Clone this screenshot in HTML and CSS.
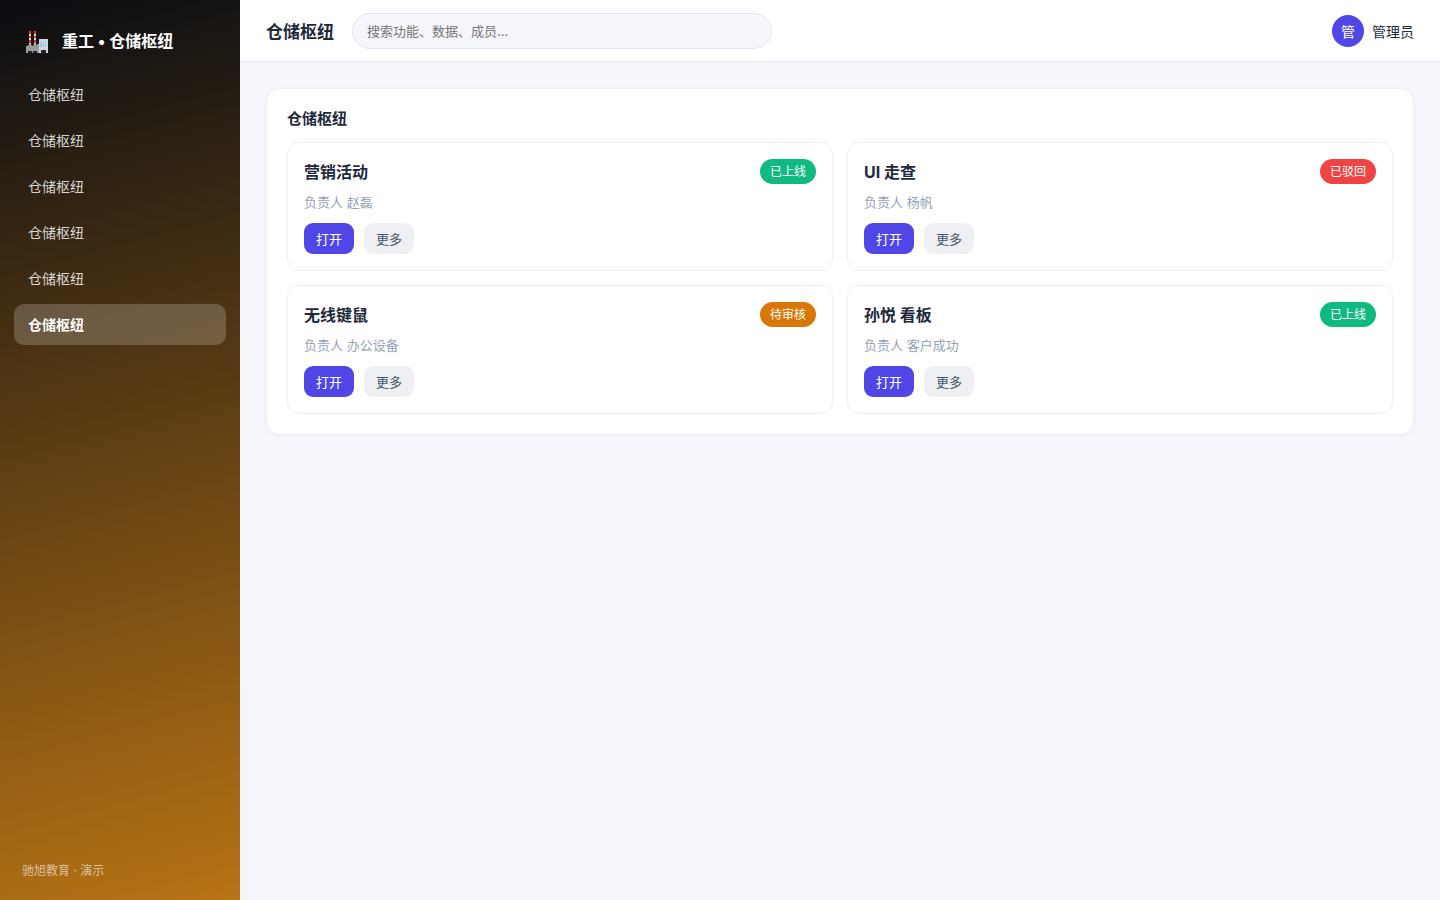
FILE: index.html
```html
<!DOCTYPE html>
<html lang="zh-CN">
<head>
<meta charset="utf-8">
<title>仓储枢纽</title>
<link rel="stylesheet" href="styles.css">
</head>
<body>
<div class="app">
  <aside class="sidebar">
    <div class="brand">
      <svg class="logo" viewBox="0 0 22 22" aria-hidden="true" shape-rendering="crispEdges">
        <path fill="#dedede" d="M3 0h2v13H3zM8 0h2v13H8z"/>
        <path fill="#f02c2c" d="M3 0h2v3H3zM8 0h2v3H8zM3 5h2v2H3zM8 5h2v2H8zM3 9h2v3H3zM8 9h2v3H8z"/>
        <path fill="#9a9a9a" d="M0 15h2v-1h1v-1h2v1h1v1h1v-1h1v-1h2v1h1v-1h2v9H0z"/>
        <path fill="#d4d7d9" d="M13 8h9v14h-9z"/>
        <path fill="#8cc8f0" d="M14 10h2v1h-2zM17 10h1v1h-1zM19 10h1v1h-1zM14 12h2v4h-2zM17 12h1v4h-1zM19 12h1v4h-1z"/>
        <path fill="#262626" d="M2 20h4v2H2zM7 20h4v2H7zM15 19h5v3h-5z"/>
      </svg>
      <span>重工 • 仓储枢纽</span>
    </div>
    <nav class="nav">
      <a class="nav-item" href="#">仓储枢纽</a>
      <a class="nav-item" href="#">仓储枢纽</a>
      <a class="nav-item" href="#">仓储枢纽</a>
      <a class="nav-item" href="#">仓储枢纽</a>
      <a class="nav-item" href="#">仓储枢纽</a>
      <a class="nav-item active" href="#" aria-current="page">仓储枢纽</a>
    </nav>
    <div class="side-foot">驰旭教育 · 演示</div>
  </aside>
  <div class="main">
    <header class="topbar">
      <h1 class="page-title">仓储枢纽</h1>
      <input class="search" type="search" aria-label="搜索" placeholder="搜索功能、数据、成员…">
      <div class="user"><span class="avatar">管</span><span>管理员</span></div>
    </header>
    <main class="content">
      <section class="panel">
        <h2 class="panel-title">仓储枢纽</h2>
        <div class="grid">
          <article class="item">
            <div class="item-head"><h3 class="item-title">营销活动</h3><span class="tag green">已上线</span></div>
            <p class="owner">负责人 赵磊</p>
            <div class="actions"><button class="btn primary">打开</button><button class="btn">更多</button></div>
          </article>
          <article class="item">
            <div class="item-head"><h3 class="item-title">UI 走查</h3><span class="tag red">已驳回</span></div>
            <p class="owner">负责人 杨帆</p>
            <div class="actions"><button class="btn primary">打开</button><button class="btn">更多</button></div>
          </article>
          <article class="item">
            <div class="item-head"><h3 class="item-title">无线键鼠</h3><span class="tag amber">待审核</span></div>
            <p class="owner">负责人 办公设备</p>
            <div class="actions"><button class="btn primary">打开</button><button class="btn">更多</button></div>
          </article>
          <article class="item">
            <div class="item-head"><h3 class="item-title">孙悦 看板</h3><span class="tag green">已上线</span></div>
            <p class="owner">负责人 客户成功</p>
            <div class="actions"><button class="btn primary">打开</button><button class="btn">更多</button></div>
          </article>
        </div>
      </section>
    </main>
  </div>
</div>
</body>
</html>
```
FILE: styles.css
```css
* { box-sizing: border-box; }
body, h1, h2, h3, p { margin: 0; }
body {
  font-family: Inter, "Noto Sans CJK SC", sans-serif;
  font-size: 14px;
  color: #1e293b;
  background: #f5f6fb;
}
button, input { font: inherit; }
.app { display: flex; min-height: 100vh; }
.sidebar {
  width: 240px;
  flex: none;
  display: flex;
  flex-direction: column;
  padding: 22px 14px;
  color: #fff;
  background: linear-gradient(165deg, #090c12, #b87314);
}
.brand {
  display: flex;
  align-items: center;
  gap: 14px;
  height: 36px;
  padding: 0 12px;
  font-size: 16px;
  font-weight: 700;
}
.logo { width: 22px; height: 22px; margin-top: 4px; }
.nav { display: flex; flex-direction: column; gap: 5px; margin-top: 16px; }
.nav-item {
  padding: 11px 14px;
  line-height: 19px;
  border-radius: 10px;
  color: rgba(255, 255, 255, .82);
  text-decoration: none;
}
.nav-item.active { color: #fff; font-weight: 700; background: rgba(255, 255, 255, .2); }
.side-foot { margin-top: auto; padding: 0 8px; font-size: 12px; line-height: 14px; color: rgba(255, 255, 255, .6); }
.main { flex: 1; min-width: 0; }
.topbar {
  display: flex;
  align-items: center;
  gap: 18px;
  height: 62px;
  padding: 0 26px;
  background: #fff;
  border-bottom: 1px solid #eeeff3;
}
.page-title { font-size: 17px; }
.search {
  width: 420px;
  height: 36px;
  padding: 0 14px;
  font-size: 13px;
  border: 1px solid #e2e5ee;
  border-radius: 18px;
  background: #f5f6fb;
  appearance: none;
}
.user { display: flex; align-items: center; gap: 8px; margin-left: auto; }
.avatar {
  display: grid;
  place-items: center;
  width: 32px;
  height: 32px;
  border-radius: 50%;
  color: #fff;
  background: #4f46e5;
}
.content { padding: 26px; }
.panel {
  padding: 20px;
  border: 1px solid #eff0f4;
  border-radius: 14px;
  background: #fff;
  box-shadow: 0 1px 4px rgba(30, 41, 90, .03);
}
.panel-title { font-size: 15px; line-height: 19px; margin-bottom: 14px; }
.grid { display: grid; grid-template-columns: 1fr 1fr; gap: 14px; }
.item { padding: 16px; border: 1px solid #eeeff2; border-radius: 12px; }
.item-head { display: flex; align-items: center; justify-content: space-between; }
.item-title { font-size: 16px; line-height: 24px; }
.tag { padding: 4px 10px; font-size: 12px; line-height: 17px; border-radius: 13px; color: #fff; }
.green { background: #10b981; }
.red { background: #ef4444; }
.amber { background: #d97706; }
.owner { margin: 10px 0 12px; font-size: 13px; line-height: 17px; color: #94a3b8; }
.actions { display: flex; gap: 10px; }
.btn {
  height: 31px;
  padding: 0 12px;
  font-size: 13px;
  border: 0;
  border-radius: 9px;
  color: #475569;
  background: #eef0f4;
}
.btn.primary { color: #fff; background: #4f46e5; }
```
